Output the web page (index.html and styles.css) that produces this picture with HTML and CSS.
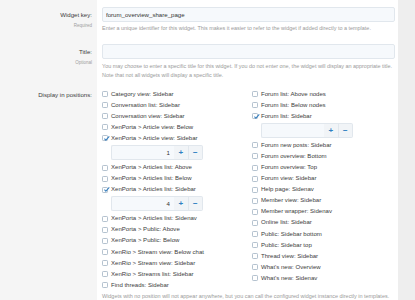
FILE: index.html
```html
<!DOCTYPE html>
<html lang="en">
<head>
  <meta charset="UTF-8">
  <title>Widget options</title>
  <link rel="stylesheet" href="styles.css">
</head>
<body>
  <div class="form">
    <!-- Widget key -->
    <div class="row">
      <div class="label">
        <span class="label-text">Widget key:</span>
        <span class="label-sub">Required</span>
      </div>
      <div class="field">
        <input class="text-input" type="text" value="forum_overview_share_page">
        <p class="hint">Enter a unique identifier for this widget. This makes it easier to refer to the widget if added directly to a template.</p>
      </div>
    </div>

    <!-- Title -->
    <div class="row">
      <div class="label">
        <span class="label-text">Title:</span>
        <span class="label-sub">Optional</span>
      </div>
      <div class="field">
        <input class="text-input" type="text" value="">
        <p class="hint">You may choose to enter a specific title for this widget. If you do not enter one, the widget will display an appropriate title.<br>Note that not all widgets will display a specific title.</p>
      </div>
    </div>

    <!-- Posiciones -->
    <div class="row row-positions">
      <div class="label">
        <span class="label-text label-inline">Display in positions:</span>
      </div>
      <div class="field">
        <div class="cols">
          <ul class="options">
            <li><span class="box"></span>Category view: Sidebar</li>
            <li><span class="box"></span>Conversation list: Sidebar</li>
            <li><span class="box"></span>Conversation view: Sidebar</li>
            <li><span class="box"></span>XenPorta &gt; Article view: Below</li>
            <li><span class="box checked"><svg viewBox="0 0 8 8"><path d="M1.6 4.2l1.7 1.7L7.2 1.6"/></svg></span>XenPorta &gt; Article view: Sidebar</li>
            <li class="spin">
              <input class="spin-input" type="text" value="1">
              <button class="spin-btn">+</button>
              <button class="spin-btn">&minus;</button>
            </li>
            <li><span class="box"></span>XenPorta &gt; Articles list: Above</li>
            <li><span class="box"></span>XenPorta &gt; Articles list: Below</li>
            <li><span class="box checked"><svg viewBox="0 0 8 8"><path d="M1.6 4.2l1.7 1.7L7.2 1.6"/></svg></span>XenPorta &gt; Articles list: Sidebar</li>
            <li class="spin">
              <input class="spin-input" type="text" value="4">
              <button class="spin-btn">+</button>
              <button class="spin-btn">&minus;</button>
            </li>
            <li><span class="box"></span>XenPorta &gt; Articles list: Sidenav</li>
            <li><span class="box"></span>XenPorta &gt; Public: Above</li>
            <li><span class="box"></span>XenPorta &gt; Public: Below</li>
            <li><span class="box"></span>XenRio &gt; Stream view: Below chat</li>
            <li><span class="box"></span>XenRio &gt; Stream view: Sidebar</li>
            <li><span class="box"></span>XenRio &gt; Streams list: Sidebar</li>
            <li><span class="box"></span>Find threads: Sidebar</li>
          </ul>
          <ul class="options">
            <li><span class="box"></span>Forum list: Above nodes</li>
            <li><span class="box"></span>Forum list: Below nodes</li>
            <li><span class="box checked"><svg viewBox="0 0 8 8"><path d="M1.6 4.2l1.7 1.7L7.2 1.6"/></svg></span>Forum list: Sidebar</li>
            <li class="spin">
              <input class="spin-input" type="text" value="">
              <button class="spin-btn">+</button>
              <button class="spin-btn">&minus;</button>
            </li>
            <li><span class="box"></span>Forum new posts: Sidebar</li>
            <li><span class="box"></span>Forum overview: Bottom</li>
            <li><span class="box"></span>Forum overview: Top</li>
            <li><span class="box"></span>Forum view: Sidebar</li>
            <li><span class="box"></span>Help page: Sidenav</li>
            <li><span class="box"></span>Member view: Sidebar</li>
            <li><span class="box"></span>Member wrapper: Sidenav</li>
            <li><span class="box"></span>Online list: Sidebar</li>
            <li><span class="box"></span>Public: Sidebar bottom</li>
            <li><span class="box"></span>Public: Sidebar top</li>
            <li><span class="box"></span>Thread view: Sidebar</li>
            <li><span class="box"></span>What's new: Overview</li>
            <li><span class="box"></span>What's new: Sidenav</li>
          </ul>
        </div>
        <p class="hint hint-bottom">Widgets with no position will not appear anywhere, but you can call the configured widget instance directly in templates.</p>
      </div>
    </div>
  </div>
</body>
</html>
```

FILE: styles.css
```css
/* General */
body {
  margin: 0;
  padding: 0;
  background-color: #eeeeee;
  font-family: "Liberation Sans", Arial, sans-serif;
  color: #333333;
}

.form {
  width: 398px;
  background-color: #ffffff;
  border-top: 1px solid #e6e6e6;
  margin-top: -1px;
}

/* Filas del formulario */
.row {
  display: grid;
  grid-template-columns: 97px 1fr;
}

.label {
  background-color: #f5f5f5;
  text-align: right;
  padding: 7px 5px 0 0;
}

.label-text {
  display: block;
  font-size: 6.1px;
  line-height: 15px;
  color: #3c3c3c;
}

.label-inline {
  line-height: 11.1px;
}

.label-sub {
  display: block;
  font-size: 4.5px;
  line-height: 7px;
  color: #a0a0a0;
}

.field {
  padding: 4.5px 3px 4.5px 5px;
}

.row-positions .label {
  padding-top: 4.5px;
}

/* Campos de texto */
.text-input {
  display: block;
  box-sizing: border-box;
  width: 100%;
  height: 15px;
  margin: 2.5px 0 0;
  padding: 0 3px;
  border: 1px solid #e1e7ed;
  border-radius: 2px;
  background-color: #f6f9fc;
  font-family: inherit;
  font-size: 6.1px;
  color: #333333;
  outline: none;
}

.hint {
  margin: 2.5px 0 0;
  font-size: 5.45px;
  line-height: 9px;
  white-space: nowrap;
  color: #9a9a9a;
}

.row:first-child .hint {
  margin-top: 1.5px;
}

.hint-bottom {
  margin-top: 1.5px;
}

/* Opciones */
.cols {
  display: grid;
  grid-template-columns: 150px 1fr;
}

.options {
  list-style: none;
  margin: 0;
  padding: 0;
}

.options li {
  display: flex;
  align-items: center;
  font-size: 6.05px;
  line-height: 11.1px;
  height: 11.1px;
  white-space: nowrap;
  color: #3c3c3c;
}

.box {
  position: relative;
  box-sizing: border-box;
  flex: none;
  width: 6px;
  height: 6px;
  margin-right: 3px;
  border: 1px solid #b4c2cf;
  border-radius: 1.2px;
  background-color: #ffffff;
}

.box svg {
  position: absolute;
  left: -0.5px;
  top: -1.5px;
  width: 7px;
  height: 7px;
}

.box svg path {
  fill: none;
  stroke: #3b82c0;
  stroke-width: 1.2;
}

/* Contador */
.options li.spin {
  height: 15px;
  margin: 1px 0 2px 9px;
  width: 92px;
}

.spin-input {
  box-sizing: border-box;
  flex: 1;
  min-width: 0;
  height: 15px;
  margin: 0;
  padding: 0 4px;
  border: 1px solid #e1e7ed;
  border-right: none;
  border-radius: 2px 0 0 2px;
  background-color: #f6f9fc;
  font-family: inherit;
  font-size: 6.1px;
  text-align: right;
  color: #333333;
  outline: none;
}

.spin-btn {
  box-sizing: border-box;
  flex: none;
  width: 14.5px;
  height: 15px;
  margin: 0;
  padding: 0;
  border: 1px solid #e1e7ed;
  border-left: none;
  background-color: #f1f4f7;
  font-family: inherit;
  font-size: 8px;
  font-weight: bold;
  line-height: 13px;
  color: #2f7fc1;
}

.spin-btn:last-child {
  border-radius: 0 2px 2px 0;
}
```
